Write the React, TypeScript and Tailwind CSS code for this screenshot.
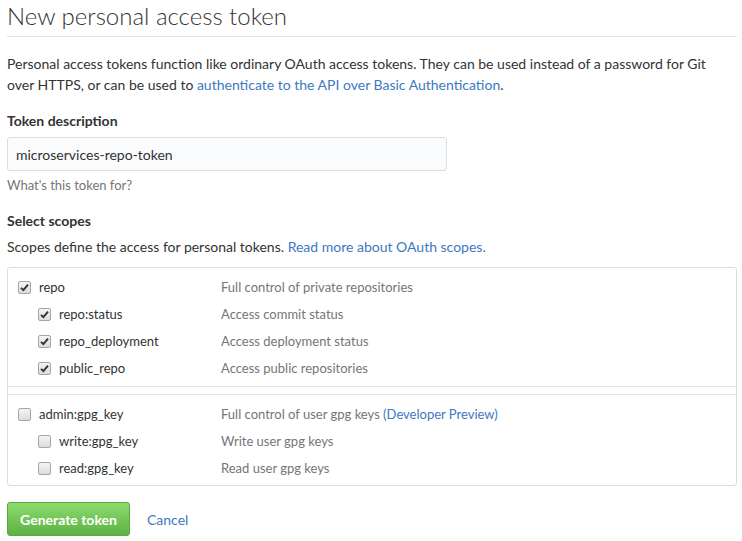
import React from 'react';

type Scope = {
  name: string;
  description: string;
  checked: boolean;
  preview?: boolean;
  children: { name: string; description: string; checked: boolean }[];
};

const scopes: Scope[] = [
  {
    name: 'repo',
    description: 'Full control of private repositories',
    checked: true,
    children: [
      { name: 'repo:status', description: 'Access commit status', checked: true },
      { name: 'repo_deployment', description: 'Access deployment status', checked: true },
      { name: 'public_repo', description: 'Access public repositories', checked: true },
    ],
  },
  {
    name: 'admin:gpg_key',
    description: 'Full control of user gpg keys',
    checked: false,
    preview: true,
    children: [
      { name: 'write:gpg_key', description: 'Write user gpg keys', checked: false },
      { name: 'read:gpg_key', description: 'Read user gpg keys', checked: false },
    ],
  },
];

const Checkbox: React.FC<{ checked: boolean }> = ({ checked }) => (
  <span className="flex h-[13px] w-[13px] shrink-0 items-center justify-center rounded-[2px] border border-[#a6a6a6] bg-gradient-to-b from-[#f4f4f4] to-[#dcdcdc]">
    {checked && (
      <svg width="9" height="9" viewBox="0 0 9 9">
        <path d="M1 4.8 L3.4 7.2 L8 1.6" fill="none" stroke="#333" strokeWidth="1.9" />
      </svg>
    )}
  </span>
);

const ScopeRow: React.FC<{ name: string; description: string; checked: boolean; child?: boolean; preview?: boolean }> = ({
  name,
  description,
  checked,
  child,
  preview,
}) => (
  <div className="flex h-[27px] items-center text-[13px]">
    <div className={`flex w-[213px] items-center gap-[8px] ${child ? 'pl-[30px]' : 'pl-[10px]'}`}>
      <Checkbox checked={checked} />
      <span className="text-[#333]">{name}</span>
    </div>
    <div className="text-[#767676]">
      {description}
      {preview && <span className="text-[#4078c0]"> (Developer Preview)</span>}
    </div>
  </div>
);

export default function App() {
  return (
    <div
      className="min-h-screen bg-white pl-[7px] pr-[5px] text-[14px] text-[#333]"
      style={{ fontFamily: 'Lato, "Open Sans", sans-serif' }}
    >
      <h1 className="border-b border-[#e5e5e5] pb-[4px] text-[24px] font-light leading-[32px]">New personal access token</h1>

      <p className="mt-4 max-w-[712px] leading-[21px]">
        Personal access tokens function like ordinary OAuth access tokens. They can be used instead of a password for Git
        over HTTPS, or can be used to <a className="text-[#4078c0]">authenticate to the API over Basic Authentication</a>.
      </p>

      <div className="mt-[15px] font-bold leading-[21px]">Token description</div>
      <div className="mt-[6px] flex h-[34px] w-[440px] items-center rounded-[3px] border border-[#ddd] bg-[#fafbfc] px-[8px] text-[14px]">
        microservices-repo-token
      </div>
      <div className="mt-[5px] text-[13px] leading-[19px] text-[#767676]">What's this token for?</div>

      <div className="mt-[15px] font-bold leading-[21px]">Select scopes</div>
      <div className="mt-[5px] leading-[21px]">
        Scopes define the access for personal tokens. <a className="text-[#4078c0]">Read more about OAuth scopes.</a>
      </div>

      <div className="mt-[10px] w-[730px] rounded-[3px] border border-[#ddd]">
        {scopes.map((s, i) => (
          <div
            key={s.name}
            className={i === 0 ? 'border-b border-[#e5e5e5] pb-[4px] pt-[6px]' : 'mt-[7px] border-t border-[#e5e5e5] pb-[3px] pt-[6px]'}
          >
            <ScopeRow name={s.name} description={s.description} checked={s.checked} preview={s.preview} />
            {s.children.map(c => (
              <ScopeRow key={c.name} name={c.name} description={c.description} checked={c.checked} child />
            ))}
          </div>
        ))}
      </div>

      <div className="mt-[16px] flex items-center gap-[17px]">
        <button className="h-[34px] w-[123px] rounded-[3px] border border-[#5ca941] bg-gradient-to-b from-[#8add6d] to-[#60b044] font-bold text-white">
          Generate token
        </button>
        <a className="text-[#4078c0]">Cancel</a>
      </div>
    </div>
  );
}
